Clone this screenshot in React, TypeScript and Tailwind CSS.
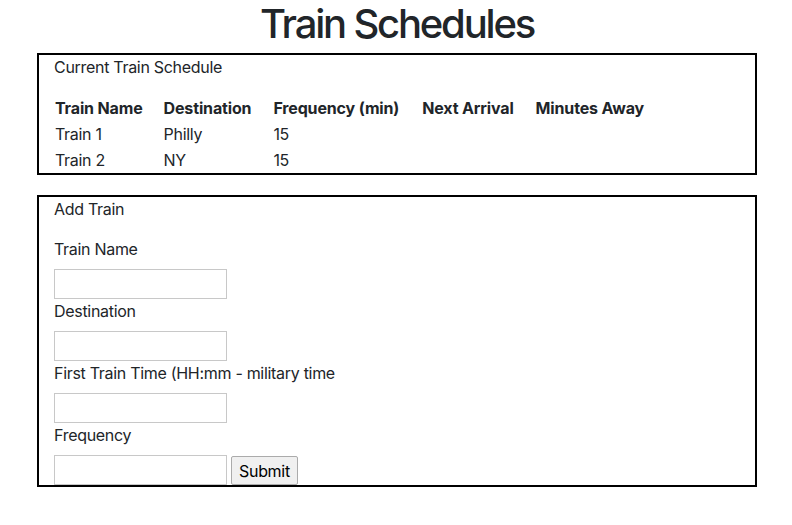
export default function App() {
  const trains = [
    { name: 'Train 1', destination: 'Philly', frequency: '15' },
    { name: 'Train 2', destination: 'NY', frequency: '15' },
  ];

  return (
    <div className="min-h-screen bg-white text-[#212529] text-[16px] leading-6 tracking-[-0.3px] font-['Inter',sans-serif]">
      <div className="w-[720px] ml-[37px]">
        <h1 className="text-center text-[40px] leading-[48px] font-medium tracking-[-2.2px] mb-[5px]">Train Schedules</h1>

        {/* Schedule */}
        <div className="border-2 border-black px-[15px]">
          <p className="mb-4">Current Train Schedule</p>
          <table className="text-left">
            <thead>
              <tr className="h-[26px] tracking-[-0.15px]">
                <th className="pl-px pr-[21px] font-bold">Train Name</th>
                <th className="pr-[22px] font-bold">Destination</th>
                <th className="pr-[23px] font-bold">Frequency (min)</th>
                <th className="pr-[22px] font-bold">Next Arrival</th>
                <th className="font-bold">Minutes Away</th>
              </tr>
            </thead>
            <tbody>
              {trains.map((t) => (
                <tr key={t.name} className="h-[26px]">
                  <td className="pl-px">{t.name}</td>
                  <td>{t.destination}</td>
                  <td>{t.frequency}</td>
                  <td></td>
                  <td></td>
                </tr>
              ))}
            </tbody>
          </table>
        </div>

        {/* Add train form */}
        <div className="border-2 border-black px-[15px] mt-5">
          <p className="mb-4">Add Train</p>
          <form onSubmit={(e) => e.preventDefault()}>
            <label className="block mb-2">Train Name</label>
            <input type="text" className="block w-[173px] h-[30px] border border-[#c8c8c8]" />
            <label className="block mb-2">Destination</label>
            <input type="text" className="block w-[173px] h-[30px] border border-[#c8c8c8]" />
            <label className="block mb-2">First Train Time (HH:mm - military time</label>
            <input type="text" className="block w-[173px] h-[30px] border border-[#c8c8c8]" />
            <label className="block mb-2">Frequency</label>
            <div className="flex items-end gap-1">
              <input type="text" className="w-[173px] h-[30px] border border-[#c8c8c8]" />
              <button type="submit" className="h-[29px] px-[7px] bg-[#f0f0f0] border border-[#ababab] rounded-[2px] text-black">Submit</button>
            </div>
          </form>
        </div>
      </div>
    </div>
  );
}
